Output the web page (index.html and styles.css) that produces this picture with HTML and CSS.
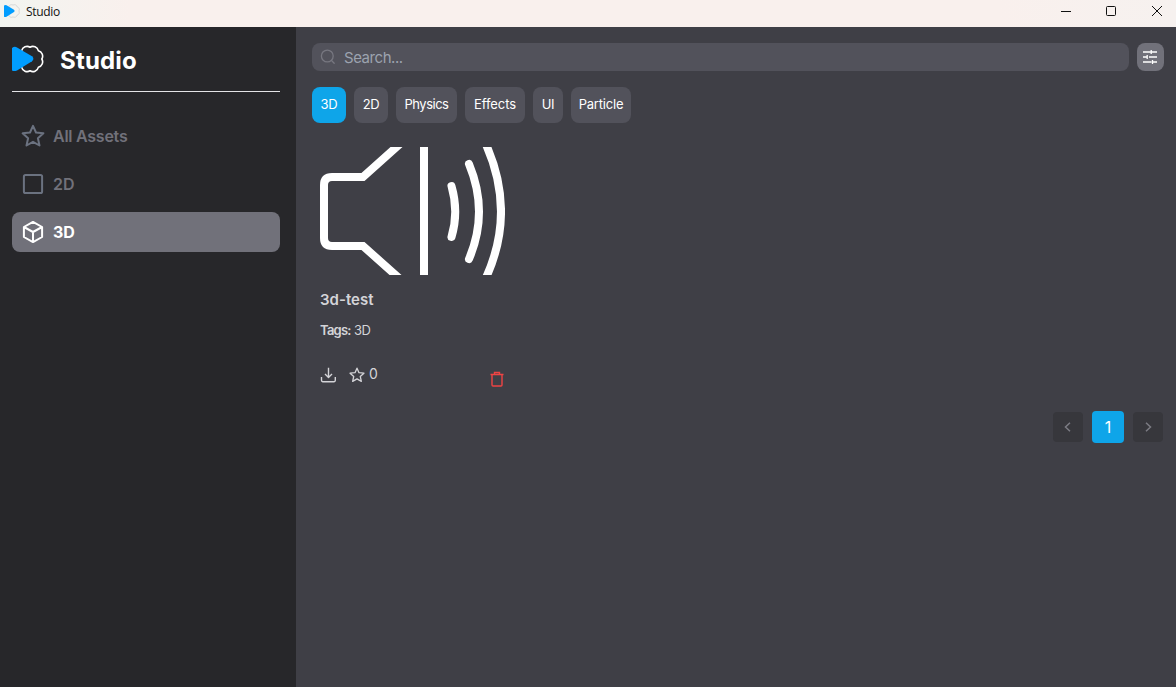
FILE: index.html
```
<!DOCTYPE html>
<html lang="en">
<head>
<meta charset="utf-8">
<title>Studio</title>
<link rel="stylesheet" href="styles.css">
</head>
<body>
<svg class="defs" aria-hidden="true">
  <symbol id="logo" viewBox="-18 -14 32 28">
    <path d="M11.800 0A5.600 5.600 0 0 1 8.340 8.340A5.600 5.600 0 0 1 0 11.800A5.600 5.600 0 0 1-8.340 8.340A5.600 5.600 0 0 1-11.800 0A5.600 5.600 0 0 1-8.340-8.340A5.600 5.600 0 0 1 0-11.800A5.600 5.600 0 0 1 8.340-8.340A5.600 5.600 0 0 1 11.800 0Z" fill="none" stroke="currentColor" stroke-width="1.600" stroke-linejoin="round"/>
    <path d="M-18-11Q-15.500-13-13-11.600L2-2.700Q4.800-.3 2 2.200L-13 11.400Q-15.800 12.800-18 11.400Z" fill="#009dff"/>
  </symbol>
  <symbol id="star" viewBox="0 0 24 24">
    <path d="M12 1.800l3 6.700 7.400.8-5.500 4.900 1.600 7.300L12 17.800l-6.500 3.700 1.600-7.300L1.600 9.300l7.400-.8z" fill="none" stroke="currentColor" stroke-width="2" stroke-linejoin="round"/>
  </symbol>
</svg>
<header class="titlebar">
  <svg class="app-icon"><use href="#logo"/></svg>
  <span class="app-name">Studio</span>
  <div class="window-controls">
    <svg viewBox="0 0 12 12"><path d="M1 6.5h10"/></svg>
    <svg viewBox="0 0 12 12"><rect x="1.5" y="1.5" width="9" height="9" rx="1"/></svg>
    <svg viewBox="0 0 12 12"><path d="M1 1l10 10M11 1L1 11"/></svg>
  </div>
</header>
<div class="shell">
  <aside class="sidebar">
    <div class="brand">
      <svg class="brand-logo"><use href="#logo"/></svg>
      <span class="brand-name">Studio</span>
    </div>
    <nav class="nav">
      <a class="nav-item"><svg class="nav-icon"><use href="#star"/></svg><span class="nav-all">All Assets</span></a>
      <a class="nav-item"><svg class="nav-icon" viewBox="0 0 24 24"><rect x="2.9" y="2.9" width="18.200" height="18.200" rx="1.600"/></svg><span>2D</span></a>
      <a class="nav-item active"><svg class="nav-icon" viewBox="0 0 24 24"><path d="M12 1.900l9.100 5.100v10L12 22.100 2.900 17V7zM2.900 7l9.100 5 9.100-5M12 12v10"/></svg><span>3D</span></a>
    </nav>
  </aside>
  <main class="main">
    <div class="search-row">
      <div class="search">
        <svg class="search-icon" viewBox="0 0 16 16"><circle cx="7.300" cy="7" r="5.900"/><path d="M11.500 11.500l2.700 2.700"/></svg>
        <span>Search...</span>
      </div>
      <button class="filter"><svg viewBox="0 0 16 16"><path d="M1 3h7.500M9.200 1v4M9.200 3H15M1 8h4M5.200 6v4M7 8h8M1 13h8.500M10.500 11v4M10.500 13H15"/></svg></button>
    </div>
    <div class="tags">
      <button class="tag t-3d active">3D</button>
      <button class="tag t-2d">2D</button>
      <button class="tag t-physics">Physics</button>
      <button class="tag t-effects">Effects</button>
      <button class="tag t-ui">UI</button>
      <button class="tag t-particle">Particle</button>
    </div>
    <article class="card">
      <svg class="preview" viewBox="0 0 185 128">
        <path d="M86-8.500L43 30H12Q4 30 4 38V91Q4 99 12 99H43L84.500 136M104-4V132"/>
        <path d="M131.500 39Q139 65 131.500 90M149 17Q169 65 149 112M163-9Q199 65 163 137" stroke-linecap="round"/>
      </svg>
      <h2 class="card-title">3d-test</h2>
      <p class="card-tags"><b>Tags:</b> <span>3D</span></p>
      <div class="card-actions">
        <svg class="download" viewBox="0 0 16 16"><path d="M8.500.8v9.500M5 7l3.500 3.500L12 7M1.500 10v3.300Q1.500 14.700 2.700 14.700H14.100Q15.300 14.700 15.300 13.300V10"/></svg>
        <svg class="fav"><use href="#star"/></svg>
        <span class="count">0</span>
        <svg class="trash" viewBox="0 0 14 16"><path d="M.5 3.500h13M4.500 3.500V1.500h5v2M2 3.500v10.500q0 1 1 1h8q1 0 1-1V3.500"/></svg>
      </div>
    </article>
    <div class="pager">
      <button class="page-step"><svg viewBox="0 0 10 10"><path d="M7 .8L2.500 5 7 9.200"/></svg></button>
      <button class="page-current">1</button>
      <button class="page-step"><svg viewBox="0 0 10 10"><path d="M3 .8L7.500 5 3 9.200"/></svg></button>
    </div>
  </main>
</div>
</body>
</html>
```
FILE: styles.css
```
* { box-sizing: border-box; }
body {
  margin: 0;
  height: 687px;
  display: flex;
  flex-direction: column;
  overflow: hidden;
  font-family: Inter, "Liberation Sans", sans-serif;
  background: #3f3f46;
}
svg { display: block; flex: none; }
button { border: 0; padding: 0; font: inherit; color: inherit; }
.defs { display: none; }
.titlebar {
  flex: none;
  height: 27px;
  display: flex;
  align-items: flex-start;
  padding-left: 4px;
  background: linear-gradient(90deg, #f2f4f0 0, #f9f0ed 130px, #f9f0ed 1000px, #f6f1ef);
  color: #111;
}
.app-icon { width: 16px; height: 14px; margin-top: 4px; color: #d0d0d0; }
.app-name {
  margin-left: 6px;
  font: 12px/24px "Open Sans", sans-serif;
  letter-spacing: -0.3px;
}
.window-controls { margin: 5px 13px 0 auto; display: flex; }
.window-controls svg { width: 12px; height: 12px; margin-left: 33px; fill: none; stroke: #111; stroke-width: 1; }
.window-controls svg:last-child { margin-left: 34px; }
.shell { flex: 1; display: flex; }
.sidebar { width: 296px; flex: none; background: #27272a; padding: 0 16px 0 12px; }
.brand {
  height: 65px;
  display: flex;
  align-items: center;
  gap: 16px;
  border-bottom: 1px solid #e4e4e7;
  color: #fff;
}
.brand-logo { width: 32px; height: 28px; }
.brand-name { font-size: 24px; font-weight: 700; letter-spacing: 0.2px; padding-top: 3px; }
.nav { margin-top: 24px; display: flex; flex-direction: column; gap: 8px; }
.nav-item {
  height: 40px;
  padding-left: 9px;
  display: flex;
  align-items: center;
  gap: 8px;
  border-radius: 8px;
  font-size: 16px;
  font-weight: 600;
  color: #71717a;
}
.nav-icon { width: 24px; height: 24px; color: #6b7280; fill: none; stroke: #6b7280; stroke-width: 2; stroke-linejoin: round; }
.nav-all { letter-spacing: -0.25px; }
.nav-item.active { background: #71717a; color: #fff; font-weight: 700; }
.nav-item.active .nav-icon { stroke: #fff; }
.main { flex: 1; padding: 16px 12px 0 16px; }
.search-row { display: flex; gap: 8px; }
.search {
  flex: 1;
  height: 28px;
  display: flex;
  align-items: center;
  gap: 8px;
  padding-left: 8px;
  border-radius: 8px;
  background: #52525b;
  color: #9ca3af;
  font-size: 15px;
  letter-spacing: -0.45px;
}
.search-icon { width: 16px; height: 16px; fill: none; stroke: #777780; stroke-width: 1.300; stroke-linecap: round; }
.filter { width: 27px; height: 28px; border-radius: 8px; background: #71717a; display: grid; place-items: center start; padding-left: 5px; }
.filter svg { width: 16px; height: 16px; fill: none; stroke: #fff; stroke-width: 1.300; }
.tags { display: flex; gap: 8px; margin-top: 16px; }
.tag {
  height: 36px;
  padding-bottom: 2px;
  border-radius: 8px;
  background: #52525b;
  color: #fff;
  font-size: 13px;
  font-weight: 400;
  text-align: center;
}
.tag.active { background: #0ea5e9; }
.t-3d, .t-2d { width: 34px; letter-spacing: -0.3px; }
.t-physics { width: 61px; letter-spacing: -0.5px; }
.t-effects { width: 60px; letter-spacing: -0.05px; }
.t-ui { width: 30px; letter-spacing: -0.4px; }
.t-particle { width: 60px; letter-spacing: -0.2px; }
.card { width: 201px; padding: 0 8px; margin-top: 24px; color: #d4d4d8; }
.preview { width: 185px; height: 128px; fill: none; stroke: #fff; stroke-width: 8; overflow: hidden; }
.card-title { margin: 15px 0 0; font-size: 15px; line-height: 20px; font-weight: 600; letter-spacing: 0; }
.card-tags { margin: 10px 0 0; font-size: 13px; line-height: 20px; letter-spacing: -0.500px; }
.card-tags b { font-weight: 600; letter-spacing: -0.750px; }
.card-actions { margin-top: 24px; height: 24px; display: flex; align-items: flex-start; }
.download { width: 16px; height: 16px; margin-top: 3px; fill: none; stroke: currentColor; stroke-width: 1.400; stroke-linejoin: round; }
.fav { width: 16px; height: 16px; margin: 3px 0 0 13px; }
.count { margin-left: 4px; font-size: 14px; line-height: 20px; }
.trash { width: 14px; height: 16px; margin: 7px 1px 0 auto; fill: none; stroke: #ef4444; stroke-width: 1.400; }
.pager { display: flex; justify-content: flex-end; align-items: center; gap: 9px; margin-top: 23px; padding-right: 1px; }
.page-step { width: 30px; height: 30px; border-radius: 4px; background: #37373c; display: grid; place-items: center; }
.page-step svg { width: 10px; height: 10px; fill: none; stroke: #7c7c84; stroke-width: 1.500; }
.page-current { width: 32px; height: 32px; border-radius: 4px; background: #0ea5e9; color: #fff; font-size: 16px; }
```
